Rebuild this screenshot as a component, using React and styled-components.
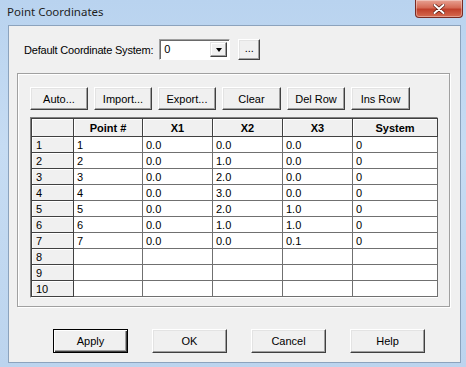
import styled, { createGlobalStyle } from 'styled-components';

const GlobalStyle = createGlobalStyle`
  html, body {
    margin: 0;
    padding: 0;
    background: #ffffff;
  }
  body {
    font-family: 'Liberation Sans', Arial, sans-serif;
    font-size: 11px;
  }
`;

const Window = styled.div`
  width: 466px;
  height: 367px;
  box-sizing: border-box;
  display: flex;
  flex-direction: column;
  padding: 0 5px 4px 8px;
  background: linear-gradient(180deg, #b9d3ef 0%, #c6dcf3 40%, #bcd4ee 100%);
  overflow: hidden;
`;

const TitleBar = styled.div`
  height: 25px;
  display: flex;
  justify-content: space-between;
  align-items: flex-start;
`;

const Title = styled.div`
  font-family: 'Noto Sans', 'Open Sans', sans-serif;
  font-size: 11.5px;
  color: #1e1e1e;
  margin-top: 4px;
  margin-left: -1px;
`;

const CloseButton = styled.div`
  width: 46px;
  height: 17px;
  margin-right: -2px;
  border: 1px solid #7a2a22;
  border-top: none;
  border-radius: 0 0 4px 4px;
  background: linear-gradient(180deg, #e8a293 0%, #d56a55 45%, #c0402b 55%, #d66a50 100%);
  display: flex;
  align-items: center;
  justify-content: center;
  box-shadow: inset 0 0 0 1px rgba(255, 255, 255, 0.35);
`;

const Client = styled.div`
  flex: 1;
  background: #f0f0f0;
  border: 1px solid #8ca3bd;
  display: flex;
  flex-direction: column;
  padding: 13px 10px 0 8px;
`;

const ComboRow = styled.div`
  display: flex;
  align-items: center;
  padding-left: 7px;
  height: 21px;
`;

const Label = styled.span`
  color: #000;
  margin-right: 6px;
  letter-spacing: -0.2px;
`;

const Combo = styled.div`
  width: 69px;
  height: 19px;
  background: #fff;
  border: 1px solid;
  border-color: #a0a0a0 #fff #fff #a0a0a0;
  box-shadow: inset 1px 1px #696969;
  display: flex;
  align-items: stretch;
  justify-content: space-between;
`;

const ComboText = styled.span`
  padding: 3px 0 0 4px;
  color: #000;
`;

const ComboArrow = styled.div`
  width: 15px;
  margin: 2px 2px 2px 0;
  background: #f0f0f0;
  border: 1px solid;
  border-color: #e3e3e3 #404040 #404040 #e3e3e3;
  box-shadow: inset -1px -1px #a0a0a0, inset 1px 1px #fff;
  display: flex;
  align-items: center;
  justify-content: center;
  &::after {
    content: '';
    border-left: 3.5px solid transparent;
    border-right: 3.5px solid transparent;
    border-top: 4px solid #000;
  }
`;

const Button = styled.div`
  box-sizing: border-box;
  width: ${(p) => p.w || 58}px;
  height: ${(p) => p.h || 23}px;
  background: #f0f0f0;
  border: 1px solid;
  border-color: ${(p) => (p.primary ? '#000' : '#fff #404040 #404040 #fff')};
  box-shadow: ${(p) =>
    p.primary
      ? 'inset 1px 1px #fff, inset -1px -1px #404040, inset -2px -2px #a0a0a0'
      : 'inset -1px -1px #a0a0a0, inset 1px 1px #e3e3e3'};
  display: flex;
  align-items: center;
  justify-content: center;
  color: #000;
  font-size: 11px;
  white-space: nowrap;
`;

const DotsButton = styled(Button)`
  margin-left: 8px;
  padding-bottom: 4px;
`;

const GroupBox = styled.div`
  margin-top: 13px;
  height: 234px;
  box-sizing: border-box;
  border: 1px solid #a0a0a0;
  box-shadow: inset 1px 1px #fff, 1px 1px #fff;
  padding: 13px 10px 0 12px;
  display: flex;
  flex-direction: column;
`;

const Toolbar = styled.div`
  display: flex;
  gap: 6px;
  height: 24px;
`;

const GridFrame = styled.div`
  margin-top: 6px;
  width: 408px;
  box-sizing: border-box;
  border: 1px solid;
  border-color: #808080 #fff #fff #808080;
  background: #fff;
`;

const Grid = styled.table`
  border-collapse: collapse;
  table-layout: fixed;
  width: 406px;
  border-top: 1px solid #404040;
  border-left: 1px solid #404040;
`;

const HeadCell = styled.th`
  height: 17px;
  padding: 0;
  background: #f0f0f0;
  border-right: 1px solid #404040;
  border-bottom: 1px solid #404040;
  box-shadow: inset 1px 1px #fff;
  font-weight: bold;
  font-size: 11px;
  text-align: center;
  color: #000;
`;

const RowHead = styled.td`
  height: 15px;
  padding: 0 0 0 4px;
  background: #f0f0f0;
  border-right: 1px solid #404040;
  border-bottom: 1px solid #404040;
  box-shadow: inset 1px 1px #fff;
  color: #000;
`;

const Cell = styled.td`
  height: 15px;
  padding: 0 0 0 3px;
  border-right: 1px solid #707070;
  border-bottom: 1px solid #707070;
  color: #000;
  background: #fff;
`;

const Footer = styled.div`
  display: flex;
  gap: 24px;
  padding: 22px 0 0 36px;
`;

const columns = [
  { label: '', width: 42 },
  { label: 'Point #', width: 69 },
  { label: 'X1', width: 70 },
  { label: 'X2', width: 70 },
  { label: 'X3', width: 70 },
  { label: 'System', width: 85 },
];

const rows = [
  ['1', '0.0', '0.0', '0.0', '0'],
  ['2', '0.0', '1.0', '0.0', '0'],
  ['3', '0.0', '2.0', '0.0', '0'],
  ['4', '0.0', '3.0', '0.0', '0'],
  ['5', '0.0', '2.0', '1.0', '0'],
  ['6', '0.0', '1.0', '1.0', '0'],
  ['7', '0.0', '0.0', '0.1', '0'],
  ['', '', '', '', ''],
  ['', '', '', '', ''],
  ['', '', '', '', ''],
];

const tools = ['Auto...', 'Import...', 'Export...', 'Clear', 'Del Row', 'Ins Row'];

const App = () => (
  <>
    <GlobalStyle />
    <Window>
      <TitleBar>
        <Title>Point Coordinates</Title>
        <CloseButton>
          <svg width="12" height="10" viewBox="0 0 12 10">
            <path
              d="M1.5 1 L10.5 9 M10.5 1 L1.5 9"
              stroke="#5a1a12"
              strokeWidth="3.4"
              strokeLinecap="round"
            />
            <path
              d="M1.5 1 L10.5 9 M10.5 1 L1.5 9"
              stroke="#fff"
              strokeWidth="2"
              strokeLinecap="round"
            />
          </svg>
        </CloseButton>
      </TitleBar>
      <Client>
        <ComboRow>
          <Label>Default Coordinate System:</Label>
          <Combo>
            <ComboText>0</ComboText>
            <ComboArrow />
          </Combo>
          <DotsButton w={22} h={21}>...</DotsButton>
        </ComboRow>
        <GroupBox>
          <Toolbar>
            {tools.map((t) => (
              <Button key={t} w={t === 'Clear' || t === 'Ins Row' ? 59 : 58}>
                {t}
              </Button>
            ))}
          </Toolbar>
          <GridFrame>
            <Grid>
              <colgroup>
                {columns.map((c, i) => (
                  <col key={i} style={{ width: c.width }} />
                ))}
              </colgroup>
              <thead>
                <tr>
                  {columns.map((c, i) => (
                    <HeadCell key={i}>{c.label}</HeadCell>
                  ))}
                </tr>
              </thead>
              <tbody>
                {rows.map((r, i) => (
                  <tr key={i}>
                    <RowHead>{i + 1}</RowHead>
                    {r.map((v, j) => (
                      <Cell key={j}>{v}</Cell>
                    ))}
                  </tr>
                ))}
              </tbody>
            </Grid>
          </GridFrame>
        </GroupBox>
        <Footer>
          <Button w={75} h={24} primary>Apply</Button>
          <Button w={75} h={24}>OK</Button>
          <Button w={75} h={24}>Cancel</Button>
          <Button w={75} h={24}>Help</Button>
        </Footer>
      </Client>
    </Window>
  </>
);

export default App;
